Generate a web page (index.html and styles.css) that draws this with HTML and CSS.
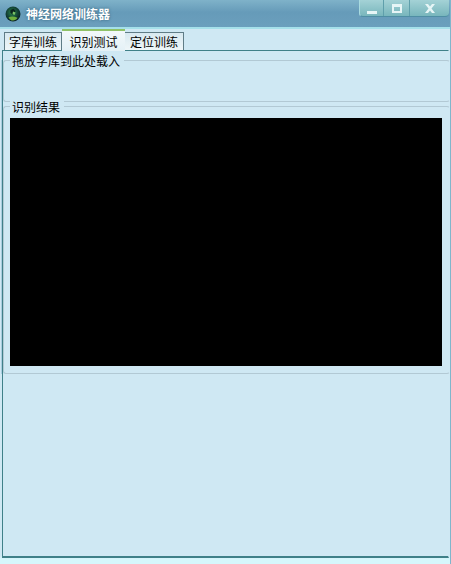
FILE: index.html
```html
<!DOCTYPE html>
<html lang="zh-CN">
<head>
<meta charset="utf-8">
<title>神经网络训练器</title>
<link rel="stylesheet" href="styles.css">
</head>
<body>
<div class="window">
  <header class="titlebar">
    <svg class="app-icon" width="16" height="16" viewBox="0 0 16 16" aria-hidden="true">
      <defs>
        <radialGradient id="globe" cx="0.45" cy="0.4" r="0.65">
          <stop offset="0" stop-color="#2f8a4c"/>
          <stop offset="0.6" stop-color="#123f34"/>
          <stop offset="1" stop-color="#0a1a20"/>
        </radialGradient>
      </defs>
      <circle cx="8" cy="8" r="7.5" fill="url(#globe)"/>
      <path d="M3.500 11.500c2.500-1.400 5.500-1.300 9 .3-1 1.800-2.800 2.800-4.500 2.800-1.800 0-3.500-1.100-4.500-3.100z" fill="#6fae3c"/>
      <path d="M5.500 4l3-1.200 2 2-.8 3-2.400.6-2-2z" fill="#0b241e"/>
      <path d="M8 5.500l2.500 1-1 2.500-2-1z" fill="#7cc468"/>
    </svg>
    <h1 class="title">神经网络训练器</h1>
    <div class="controls">
      <button class="ctl ctl-min" aria-label="最小化"><span class="glyph-min"></span></button>
      <button class="ctl ctl-max" aria-label="最大化"><span class="glyph-max"></span></button>
      <button class="ctl ctl-close" aria-label="关闭">
        <svg width="10" height="9" viewBox="0 0 10 9" aria-hidden="true"><path d="M0 0h3l2 2.500L7 0h3L6.500 4.500 10 9H7L5 6.500 3 9H0l3.500-4.500z" fill="#e6f5f6"/></svg>
      </button>
    </div>
  </header>
  <div class="client">
    <nav class="tabs">
      <span class="tab tab-first">字库训练</span>
      <span class="tab tab-active">识别测试</span>
      <span class="tab">定位训练</span>
    </nav>
    <main class="pane">
      <div class="groups">
        <section class="group group-load">
          <span class="legend">拖放字库到此处载入</span>
        </section>
        <section class="group group-result">
          <span class="legend">识别结果</span>
          <div class="canvas"></div>
        </section>
      </div>
    </main>
  </div>
</div>
</body>
</html>
```
FILE: styles.css
```css
* { box-sizing: border-box; }
html, body { margin: 0; padding: 0; }
body {
  width: 451px;
  height: 564px;
  overflow: hidden;
  font-family: "Noto Sans CJK SC", "Liberation Sans", sans-serif;
  font-size: 12px;
  color: #000;
  background: #cfe8f3;
}
.window {
  width: 451px;
  height: 564px;
  display: flex;
  flex-direction: column;
  border-right: 1px solid #7fb6cc;
  background: linear-gradient(#cfe8f3 556px, #d6f7fc 559px);
}
.titlebar {
  flex: 0 0 29px;
  height: 29px;
  display: flex;
  align-items: flex-start;
  padding-left: 5px;
  background: linear-gradient(#7fb2c9, #669bb9 45%, #6b9fbd);
  border-bottom: 2px solid #a5e0ea;
}
.app-icon { margin-top: 6px; flex: none; }
.title {
  margin: 6px 0 0 5px;
  font-size: 12px;
  line-height: 16px;
  font-weight: 700;
  color: #fff;
  text-shadow: 0 0 3px #2f5f78;
}
.controls {
  margin-left: auto;
  margin-right: 1px;
  display: flex;
  height: 17px;
  border-left: 1px solid #a9dbe0;
  border-bottom: 1px solid #4f8ea4;
  border-radius: 0 0 4px 4px;
  background: linear-gradient(#a4d2d6, #78b6bc);
}
.ctl {
  height: 16px;
  padding: 0;
  border: 0;
  border-right: 1px solid #5f9fab;
  background: transparent;
  display: flex;
  align-items: center;
  justify-content: center;
}
.ctl-min { width: 24px; }
.ctl-max { width: 26px; }
.ctl-close { width: 39px; border-right: 0; }
.glyph-min { width: 10px; height: 3px; margin-top: 8px; background: #e6f5f6; }
.glyph-max { width: 10px; height: 9px; border: 2px solid #e6f5f6; border-top-width: 3px; }
.client {
  flex: 1;
  display: flex;
  flex-direction: column;
  padding: 2px 1px 6px 2px;
  min-height: 0;
}
.tabs {
  display: flex;
  height: 19px;
  padding-left: 2px;
  position: relative;
  z-index: 1;
}
.tab {
  height: 18px;
  margin-top: 1px;
  width: 59px;
  line-height: 17px;
  text-align: center;
  background: linear-gradient(#d8e9f0, #eef6f8);
  border: 1px solid #5f7c86;
  border-left-width: 0;
  border-bottom: 0;
  white-space: nowrap;
}
.tab-first { width: 58px; border-left-width: 1px; }
.tab-active {
  height: 22px;
  margin-top: -2px;
  width: 63px;
  line-height: 21px;
  background: linear-gradient(#f2f8fa, #e4f1f6);
  border: 0;
  border-top: 2px solid #8fc268;
}
.pane {
  flex: 1;
  min-height: 0;
  display: flex;
  flex-direction: column;
  border: 1px solid #3f8088;
  border-width: 1px 1px 2px 1px;
  border-right-color: #cfe8f3;
}
.groups {
  margin: 9px 0 0 -2px;
  padding-left: 1px;
  border-left: 1px solid #a9cde0;
  width: 449px;
}
.group {
  position: relative;
  border: 1px solid #b2c9d4;
  border-right-color: transparent;
  border-radius: 3px;
}
.group-load { height: 42px; }
.group-result {
  height: 268px;
  margin-top: 4px;
  padding: 11px 0 7px 6px;
}
.legend {
  position: absolute;
  left: 6px;
  top: -7px;
  padding: 0 4px 0 2px;
  line-height: 13px;
  background: #cfe8f3;
}
.canvas { height: 248px; width: 432px; background: #000; }
```
